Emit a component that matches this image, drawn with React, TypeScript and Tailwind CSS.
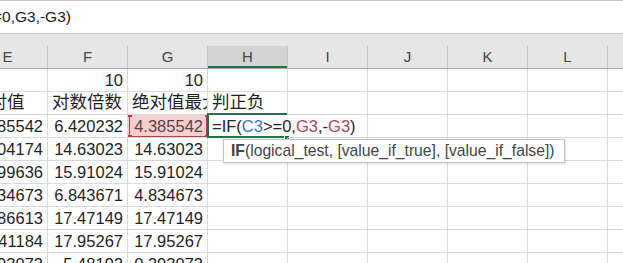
import React from "react";

const cols = ["E", "F", "G", "H", "I", "J", "K", "L", "M"];

type Cell = { v: string; t?: "num" | "text" };

const data: Cell[][] = [
  [{ v: "" }, { v: "10", t: "num" }, { v: "10", t: "num" }],
  [{ v: "绝对值", t: "text" }, { v: "对数倍数", t: "text" }, { v: "绝对值最大", t: "text" }, { v: "判正负", t: "text" }],
  [{ v: "-4.385542", t: "num" }, { v: "6.420232", t: "num" }, { v: "4.385542", t: "num" }],
  [{ v: "-3.704174", t: "num" }, { v: "14.63023", t: "num" }, { v: "14.63023", t: "num" }],
  [{ v: "-2.399636", t: "num" }, { v: "15.91024", t: "num" }, { v: "15.91024", t: "num" }],
  [{ v: "-4.834673", t: "num" }, { v: "6.843671", t: "num" }, { v: "4.834673", t: "num" }],
  [{ v: "-4.686613", t: "num" }, { v: "17.47149", t: "num" }, { v: "17.47149", t: "num" }],
  [{ v: "-6.141184", t: "num" }, { v: "17.95267", t: "num" }, { v: "17.95267", t: "num" }],
  [{ v: "-0.393073", t: "num" }, { v: "-5.48192", t: "num" }, { v: "0.393073", t: "num" }],
];

function Handle({ pos, color }: { pos: string; color: string }) {
  return <div className={`absolute w-[5px] h-[5px] ${pos} ${color}`} />;
}

export default function App() {
  return (
    <div className="w-[623px] h-[263px] overflow-hidden bg-white relative font-['Liberation_Sans','Noto_Sans_CJK_SC',sans-serif] text-[#1f1f1f]">
      {/* formula bar */}
      <div className="h-[34px] border-t border-b border-[#c6c6c6] bg-white flex items-center overflow-hidden">
        <span className="ml-[-7px] whitespace-nowrap text-[15.5px] text-[#222]">=0,G3,-G3)</span>
      </div>
      {/* gap */}
      <div className="h-[12px] bg-[#e6e6e6]" />
      {/* header */}
      <div className="flex ml-[-32px] h-[23px] bg-[#e6e6e6] border-b border-[#ababab]">
        {cols.map((c) => (
          <div
            key={c}
            className={`w-[80px] shrink-0 h-full border-r border-[#c4c4c4] flex items-center justify-center text-[15px] text-[#444] ${
              c === "H" ? "bg-[#d3d3d3] shadow-[inset_0_-2px_0_#217346]" : ""
            }`}
          >
            {c}
          </div>
        ))}
      </div>
      {/* rows */}
      {data.map((row, ri) => (
        <div key={ri} className="flex ml-[-32px] h-[23px]">
          {cols.map((c, ci) => {
            const cell = row[ci];
            const isG3 = ri === 2 && c === "G";
            const isH3 = ri === 2 && c === "H";
            const hasText = cell && cell.v;
            const isText = cell?.t === "text";
            return (
              <div
                key={c}
                className={`relative w-[80px] shrink-0 h-full border-b border-r border-[#dadada] flex items-center ${
                  isH3 ? "border-r-white overflow-visible" : "overflow-hidden"
                } ${isG3 ? "bg-[#f3cfd0]" : ""} ${isText ? "justify-start pl-[4px]" : "justify-end pr-[4px]"}`}
              >
                {hasText ? (
                  <span
                    className={`whitespace-nowrap ${isText ? "text-[17.5px] leading-none" : "text-[16.5px]"} ${
                      isG3 ? "text-[#5e4040]" : ""
                    }`}
                  >
                    {cell.v}
                  </span>
                ) : null}
                {isG3 && (
                  <>
                    <div className="absolute left-[1px] top-[-1px] right-[0px] bottom-[0px] border border-[#a8444f]" />
                    <Handle pos="left-[-1px] top-[-3px]" color="bg-[#a8444f]" />
                    <Handle pos="right-[-3px] top-[-3px]" color="bg-[#a8444f]" />
                    <Handle pos="left-[-1px] bottom-[-3px]" color="bg-[#a8444f]" />
                    <Handle pos="right-[-3px] bottom-[-3px]" color="bg-[#a8444f]" />
                  </>
                )}
                {isH3 && (
                  <>
                    <div className="absolute left-[-1px] top-[-2px] right-[0px] bottom-[-1px] border-2 border-r-0 border-[#217346]" />
                    <div className="absolute right-[-3px] bottom-[-4px] w-[6px] h-[6px] bg-[#217346] border border-white" />
                    <span className="absolute left-[4px] top-0 h-full flex items-center whitespace-nowrap text-[16.5px] z-10 text-[#222]">
                      =IF(<span className="text-[#3f74b5]">C3</span>&gt;=0,
                      <span className="text-[#b2475a]">G3</span>,-
                      <span className="text-[#b2475a]">G3</span>)
                    </span>
                  </>
                )}
              </div>
            );
          })}
        </div>
      ))}
      {/* tooltip */}
      <div className="absolute left-[223px] top-[139px] w-[342px] h-[24px] bg-white border border-[#c3c3c3] shadow-[1px_1px_2px_rgba(0,0,0,0.12)] flex items-center pl-[7px] z-20">
        <span className="whitespace-nowrap text-[15.7px] text-[#444]">
          <span className="font-bold">IF</span>(logical_test, [value_if_true], [value_if_false])
        </span>
      </div>
    </div>
  );
}
